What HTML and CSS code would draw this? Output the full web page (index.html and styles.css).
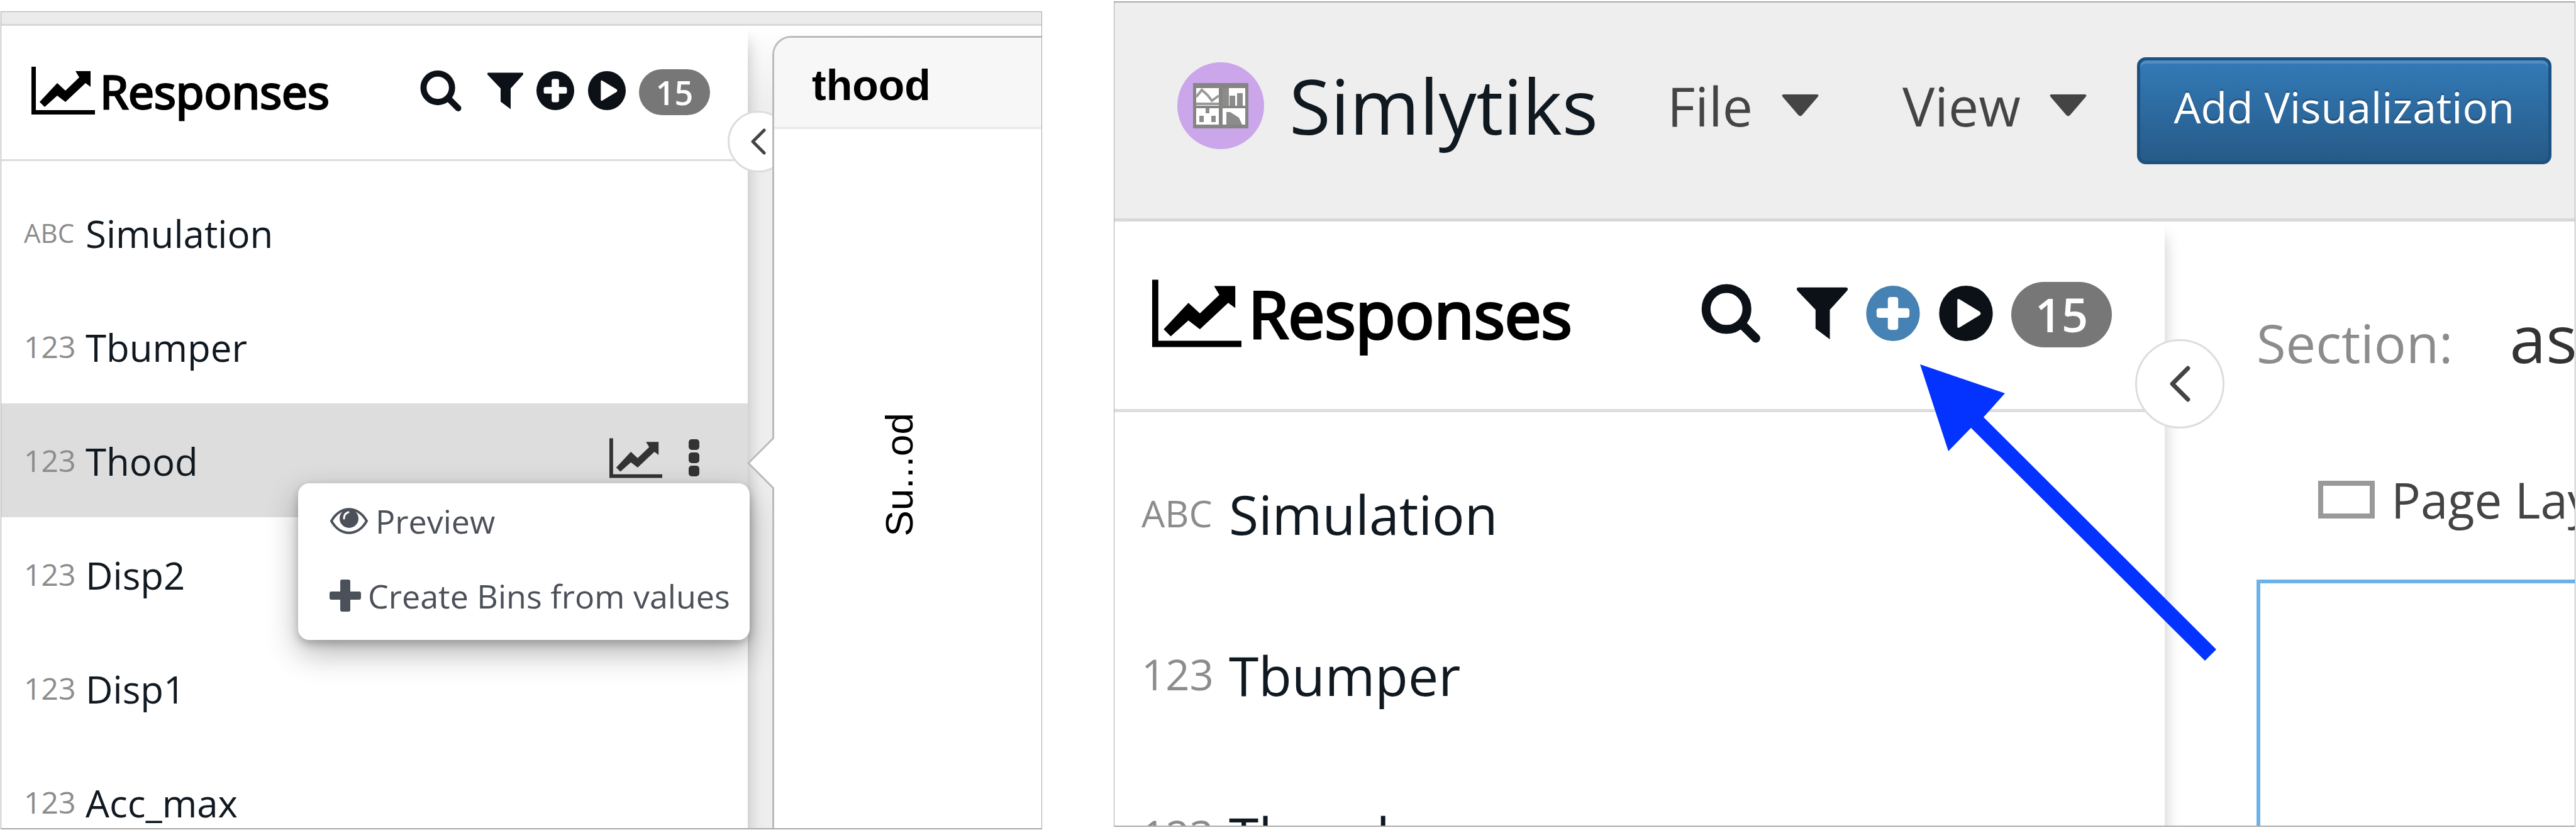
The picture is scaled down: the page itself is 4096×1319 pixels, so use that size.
FILE: index.html
```html
<!DOCTYPE html>
<html lang="en">
<head>
<meta charset="utf-8">
<title>Simlytiks</title>
<link rel="stylesheet" href="styles.css">
</head>
<body>
<svg class="sprite" aria-hidden="true">
  <symbol id="chart" viewBox="0 0 101 76"><path d="M0 0H7V69H101V76H0Z"/><path d="M13 56 41 26 54 38 76 17 70 7H94V32L86 26 54 56 41 46 21 64Z"/></symbol>
  <symbol id="search" viewBox="0 0 67 68"><circle cx="28" cy="29" r="23" fill="none" stroke="currentColor" stroke-width="10"/><path d="M45 46 61 62" stroke="currentColor" stroke-width="10" stroke-linecap="round"/></symbol>
  <symbol id="filter" viewBox="0 0 57 58"><path d="M2 0H55C57 0 58 2 56 4L37 25V58L21 46V25L1 4C-1 2 0 0 2 0Z"/></symbol>
  <symbol id="add" viewBox="0 0 62 64"><path fill-rule="evenodd" d="M31 0A31 32 0 1 1 31 64A31 32 0 1 1 31 0ZM28 13Q25 13 25 16V26H15Q12 26 12 29V34Q12 37 15 37H25V48Q25 51 28 51H34Q37 51 37 48V37H47Q50 37 50 34V29Q50 26 47 26H37V16Q37 13 34 13Z"/></symbol>
  <symbol id="play" viewBox="0 0 62 64"><path fill-rule="evenodd" d="M31 0A31 32 0 1 1 31 64A31 32 0 1 1 31 0ZM21 17V47Q21 50 24 48L47 34Q49 32 47 30L24 16Q21 14 21 17Z"/></symbol>
  <symbol id="chevron" viewBox="0 0 24 42"><path d="M21 3 3 21 21 39" fill="none" stroke="currentColor" stroke-width="5" stroke-linecap="round" stroke-linejoin="round"/></symbol>
  <symbol id="caret" viewBox="0 0 60 36"><path d="M3 0H57Q62 0 58 5L33 34Q30 37 27 34L2 5Q-2 0 3 0Z"/></symbol>
</svg>

<section class="frame frame-left">
  <div class="strip"></div>
  <div class="columns columns-left">
    <aside class="sidebar">
      <header class="side-head">
        <svg class="chart"><use href="#chart"/></svg>
        <h2 class="side-title">Responses</h2>
        <div class="tools">
          <button class="tool tool-search" aria-label="Search"><svg><use href="#search"/></svg></button>
          <button class="tool tool-filter" aria-label="Filter"><svg><use href="#filter"/></svg></button>
          <button class="tool" aria-label="Add"><svg><use href="#add"/></svg></button>
          <button class="tool" aria-label="Run"><svg><use href="#play"/></svg></button>
          <span class="badge">15</span>
        </div>
      </header>
      <ul class="list">
        <li class="row"><span class="type type-abc">ABC</span><span class="name">Simulation</span></li>
        <li class="row"><span class="type">123</span><span class="name">Tbumper</span></li>
        <li class="row row-selected"><span class="type">123</span><span class="name">Thood</span>
          <div class="row-actions">
            <button class="act act-chart" aria-label="Plot"><svg><use href="#chart"/></svg></button>
            <button class="act act-more" aria-label="More"><svg viewBox="0 0 17 60"><rect width="17" height="17" rx="5"/><rect y="21" width="17" height="17" rx="5"/><rect y="42" width="17" height="17" rx="5"/></svg></button>
          </div>
          <div class="menu">
            <button class="menu-item"><svg class="eye" viewBox="0 0 62 42"><path d="M3 21C17 -4 45 -4 59 21C45 46 17 46 3 21Z" fill="none" stroke="currentColor" stroke-width="4"/><circle cx="31" cy="17" r="15"/><path d="M23 17Q23 9 30 7" fill="none" stroke="#fff" stroke-width="3" stroke-linecap="round"/></svg>Preview</button>
            <button class="menu-item"><svg class="plus" viewBox="0 0 50 51"><path d="M20 0H30Q33 0 33 3V19H47Q50 19 50 22V29Q50 32 47 32H33V48Q33 51 30 51H20Q17 51 17 48V32H3Q0 32 0 29V22Q0 19 3 19H17V3Q17 0 20 0Z"/></svg>Create Bins from values</button>
          </div>
        </li>
        <li class="row"><span class="type">123</span><span class="name">Disp2</span></li>
        <li class="row"><span class="type">123</span><span class="name">Disp1</span></li>
        <li class="row"><span class="type">123</span><span class="name">Acc_max</span></li>
      </ul>
      <button class="toggle" aria-label="Collapse"><svg><use href="#chevron"/></svg></button>
    </aside>
    <div class="gutter">
      <article class="card">
        <h3 class="card-title">thood</h3>
        <svg class="notch" viewBox="0 0 43 82"><path d="M43 0 2 41 43 82" fill="#fff" stroke="#bbb" stroke-width="3"/></svg>
        <p class="axis">Su...od</p>
      </article>
    </div>
  </div>
</section>

<section class="frame frame-right">
  <header class="topbar">
    <svg class="logo" viewBox="0 0 138 138">
      <circle cx="69" cy="69" r="69" fill="#cba6ea"/>
      <g transform="translate(25 33)">
        <rect width="88" height="72" fill="#858583"/>
        <path d="M5 8H41V36H5ZM47 8H83V36H47ZM5 40H41V66H5ZM47 40H83V66H47Z" fill="#fff"/>
        <path d="M5 22 14 11 23 19 30 28 41 20M5 33H41" fill="none" stroke="#999" stroke-width="4"/>
        <path d="M47 8H57V36H47ZM58 20H67V36H58ZM70 16H79V36H70ZM20 40H26V48H20ZM10 52H17V62H10ZM29 52H36V62H29ZM53 64V46H59L73 55 78 66H53Z" fill="#8c8c8c"/>
      </g>
    </svg>
    <h1 class="brand">Simlytiks</h1>
    <button class="drop">File<svg class="caret"><use href="#caret"/></svg></button>
    <button class="drop">View<svg class="caret"><use href="#caret"/></svg></button>
    <button class="primary">Add Visualization</button>
  </header>
  <div class="columns columns-right">
    <aside class="sidebar sidebar-large">
      <header class="side-head">
        <svg class="chart"><use href="#chart"/></svg>
        <h2 class="side-title">Responses</h2>
        <div class="tools">
          <button class="tool tool-search" aria-label="Search"><svg><use href="#search"/></svg></button>
          <button class="tool tool-filter" aria-label="Filter"><svg><use href="#filter"/></svg></button>
          <button class="tool tool-active" aria-label="Add"><svg><use href="#add"/></svg></button>
          <button class="tool" aria-label="Run"><svg><use href="#play"/></svg></button>
          <span class="badge">15</span>
        </div>
      </header>
      <ul class="list">
        <li class="row"><span class="type type-abc">ABC</span><span class="name">Simulation</span></li>
        <li class="row"><span class="type">123</span><span class="name">Tbumper</span></li>
        <li class="row"><span class="type">123</span><span class="name">Thood</span></li>
      </ul>
      <button class="toggle" aria-label="Collapse"><svg><use href="#chevron"/></svg></button>
      <svg class="pointer" viewBox="0 0 471 471"><path d="M0 0 135 46 101 84 471 453 453 471 81 101 45 138Z" fill="#0433ff"/></svg>
    </aside>
    <main class="page">
      <p class="section"><span class="section-label">Section:</span><span class="section-name">as</span></p>
      <p class="layout"><svg class="layout-icon" viewBox="0 0 90 60"><rect x="4" y="4" width="82" height="52" fill="none" stroke="#999" stroke-width="8"/></svg>Page Lay</p>
      <div class="canvas"></div>
    </main>
  </div>
</section>
</body>
</html>
```

FILE: styles.css
```css
* { box-sizing: border-box; }

body {
  margin: 0;
  padding: 0 1px;
  height: 100vh;
  overflow: hidden;
  display: grid;
  grid-template-columns: minmax(0, 1656fr) minmax(0, 2324fr);
  grid-template-rows: minmax(0, 1fr);
  column-gap: 114px;
  background: #fff;
  color: #101820;
  font-family: "Open Sans", "Noto Sans", sans-serif;
}

h1, h2, h3, p, ul { margin: 0; padding: 0; font-weight: 400; }
ul { list-style: none; }
button { border: 0; padding: 0; background: none; color: inherit; font: inherit; white-space: nowrap; }
svg { display: block; fill: currentColor; flex: none; }
.sprite { position: absolute; width: 0; height: 0; }

.frame { display: flex; flex-direction: column; overflow: hidden; border: 1px solid #aaa; }
.frame-left { margin: 18px 0 1px; border-bottom-width: 2px; }
.frame-right { margin: 2px 0 5px; border-top-width: 2px; border-bottom-width: 2px; }
.strip { flex: none; height: 22px; background: #ebebeb; border-bottom: 3px solid #d8d8d8; }

.columns { flex: 1; min-height: 0; display: grid; grid-template-rows: minmax(0, 1fr); }
.columns-left { grid-template-columns: minmax(0, 1187fr) minmax(0, 467fr); }
.columns-right { grid-template-columns: minmax(0, 1670fr) minmax(0, 652fr); }

/* Sidebar */
.sidebar {
  --head: 215px; --head-pad: 48px; --head-end: 60px; --line: 3px;
  --chart-w: 101px; --chart-h: 76px; --title: 73px; --stroke: 3px; --title-gap: 8px;
  --search: 67px; --filter: 57px; --tool: 62px; --gap: 20px;
  --badge-w: 113px; --badge-h: 73px; --badge-text: 52px;
  --row: 181px; --list-pad: 23px; --row-pad: 36px; --type-w: 98px;
  --type: 48px; --abc: 42px; --name: 60px;
  --toggle: 98px; --toggle-top: 135px; --toggle-end: -66px; --chevron-w: 24px; --chevron-h: 42px;
  position: relative;
  z-index: 1;
  background: #fff;
  box-shadow: 0 24px 24px rgba(0, 0, 0, .22);
}
.sidebar-large {
  --head: 303px; --head-pad: 60px; --head-end: 84px; --line: 5px;
  --chart-w: 142px; --chart-h: 108px; --title: 103px; --stroke: 4px; --title-gap: 11px;
  --search: 96px; --filter: 81px; --tool: 88px; --gap: 28px;
  --badge-w: 160px; --badge-h: 104px; --badge-text: 74px;
  --row: 256px; --list-pad: 32px; --row-pad: 43px; --type-w: 139px;
  --type: 67px; --abc: 59px; --name: 86px;
  --toggle: 142px; --toggle-top: 187px; --toggle-end: -95px; --chevron-w: 33px; --chevron-h: 58px;
}
.side-head {
  height: var(--head);
  padding: 0 var(--head-end) 6px var(--head-pad);
  display: flex;
  align-items: center;
  border-bottom: var(--line) solid #ddd;
}
.chart { width: var(--chart-w); height: var(--chart-h); color: #000; }
.side-title {
  margin-left: var(--title-gap);
  font-size: var(--title);
  line-height: 1;
  color: #000;
  -webkit-text-stroke: var(--stroke) #000;
}
.tools { margin-left: auto; display: flex; align-items: center; gap: var(--gap); color: #0c1118; }
.tool svg { width: var(--tool); height: var(--tool); }
.tool-search { margin-right: var(--gap); }
.tool-search svg { width: var(--search); height: var(--search); }
.tool-filter svg { width: var(--filter); height: var(--search); }
.tool-active { color: #4682b4; }
.badge {
  width: var(--badge-w);
  height: var(--badge-h);
  margin-top: 4px;
  border-radius: 60px;
  background: #777;
  color: #fff;
  font-size: var(--badge-text);
  font-weight: 600;
  line-height: var(--badge-h);
  text-align: center;
}

.list { padding-top: var(--list-pad); }
.row { position: relative; height: var(--row); padding-left: var(--row-pad); display: flex; align-items: center; }
.row-selected { background: #ddd; }
.type { width: var(--type-w); font-size: var(--type); color: #8c8c8c; }
.type-abc { font-size: var(--abc); }
.name { padding-top: 3px; font-size: var(--name); }
.row-actions { margin-left: auto; padding: 0 77px 8px 0; display: flex; align-items: center; gap: 42px; color: #333; }
.act-chart svg { width: 84px; height: 64px; }
.act-more svg { width: 17px; height: 60px; }

.toggle {
  position: absolute;
  top: var(--toggle-top);
  right: var(--toggle-end);
  width: var(--toggle);
  height: var(--toggle);
  display: grid;
  place-items: center;
  border: 3px solid #ddd;
  border-radius: 50%;
  background: #fff;
  color: #444;
}
.toggle svg { width: var(--chevron-w); height: var(--chevron-h); }

.menu {
  position: absolute;
  z-index: 2;
  top: 127px;
  right: -3px;
  width: 718px;
  height: 249px;
  padding: 0 0 12px 50px;
  border-radius: 18px;
  background: #fff;
  box-shadow: 0 20px 50px rgba(0, 0, 0, .3), 0 6px 14px rgba(0, 0, 0, .22);
  color: #4b5059;
}
.menu-item { height: 119px; display: flex; align-items: center; gap: 11px; font-size: 52px; line-height: 72px; }
.eye { width: 62px; height: 42px; }
.plus { width: 50px; height: 51px; }

/* Preview card */
.gutter { padding: 16px 0 0 39px; background: linear-gradient(#fff, #eee 130px); }
.card {
  position: relative;
  z-index: 2;
  height: 100%;
  border: 3px solid #bbb;
  border-width: 3px 0 0 3px;
  border-radius: 30px 0 0 0;
  background: #fff;
  font-family: "Liberation Sans", Arial, sans-serif;
  color: #000;
}
.card-title {
  height: 145px;
  padding: 8px 0 0 60px;
  border-bottom: 3px solid #e8e8e8;
  border-radius: 27px 0 0 0;
  background: #f7f7f7;
  font-size: 68px;
  font-weight: 700;
  line-height: 134px;
}
.notch { position: absolute; left: -43px; top: 635px; width: 43px; height: 82px; }
.axis {
  margin: 451px 0 0 163px;
  width: 72px;
  font-size: 62px;
  line-height: 72px;
  writing-mode: vertical-rl;
  transform: rotate(180deg);
}

/* Application bar */
.topbar {
  flex: none;
  height: 348px;
  padding: 0 37px 16px 100px;
  display: flex;
  align-items: center;
  background: #eee;
  border-bottom: 5px solid #d8d8d8;
}
.logo { width: 138px; height: 138px; margin-right: 40px; }
.brand { margin-right: 110px; font-size: 120px; line-height: 1; }
.drop { display: flex; align-items: center; gap: 46px; font-size: 86px; line-height: 1; color: #444; }
.drop + .drop { margin-left: 133px; }
.caret { width: 59px; height: 35px; }
.primary {
  height: 170px;
  margin: 16px 0 0 auto;
  padding: 0 54px 12px;
  border: 5px solid #1c5180;
  border-radius: 14px;
  background: linear-gradient(#337ab7, #265a88);
  box-shadow: inset 0 5px 0 rgba(255, 255, 255, .15);
  color: #fff;
  font-size: 68px;
  text-shadow: 0 -3px 0 rgba(0, 0, 0, .2);
}

/* Page area */
.page { min-width: 0; padding: 125px 0 0 146px; display: flex; flex-direction: column; color: #333; white-space: nowrap; }
.section { display: flex; align-items: baseline; gap: 90px; line-height: 120px; }
.section-label { font-size: 85px; color: #8c8c8c; }
.section-name { font-size: 104px; }
.layout { margin-top: 130px; padding-left: 98px; display: flex; align-items: center; gap: 26px; font-size: 78px; line-height: 120px; color: #444; }
.layout-icon { width: 90px; height: 60px; }
.canvas { flex: 1; margin-top: 67px; border: 6px solid #6bb1ea; border-width: 6px 0 0 6px; }

.pointer { position: absolute; top: 227px; right: -82px; width: 471px; height: 471px; }
```
